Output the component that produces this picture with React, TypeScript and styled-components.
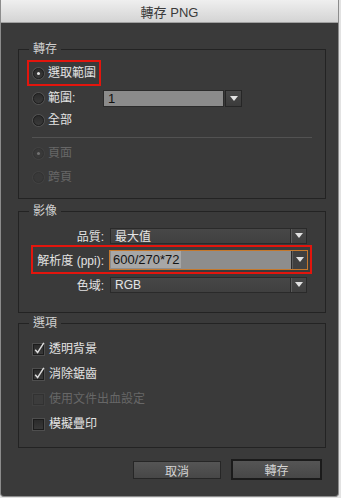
import styled, { createGlobalStyle } from "styled-components";

const GlobalStyle = createGlobalStyle`
  html, body {
    margin: 0;
    padding: 0;
    background: #e2e2e2;
  }
  body {
    font-family: "Liberation Sans", "Noto Sans CJK TC", sans-serif;
    font-size: 12px;
  }
`;

const Window = styled.div`
  box-sizing: border-box;
  width: 339px;
  height: 497px;
  display: flex;
  flex-direction: column;
  border: 1px solid #8c8c8c;
  border-top: none;
  border-radius: 0 0 4px 4px;
  overflow: hidden;
  background: #3a3a3a;
`;

const TitleBar = styled.div`
  flex: none;
  height: 22px;
  display: flex;
  align-items: center;
  justify-content: center;
  background: linear-gradient(#efefef, #d4d4d4);
  border-bottom: 1px solid #a0a0a0;
  color: #3a3a3a;
  font-size: 13px;
`;

const Body = styled.div`
  flex: 1;
  display: flex;
  flex-direction: column;
  padding: 18px 12px 0 17px;
`;

const Group = styled.fieldset<{ $mt?: number; $pt: number; $pb: number }>`
  margin: ${({ $mt }) => $mt ?? 0}px 0 0;
  padding: ${({ $pt }) => $pt}px 13px ${({ $pb }) => $pb}px 8px;
  border: 1px solid #232323;
  min-width: 0;
  display: flex;
  flex-direction: column;
  align-items: flex-start;
`;

const Legend = styled.legend`
  margin-left: 2px;
  padding: 0 4px;
  line-height: 16px;
  font-size: 12px;
  color: #d0d0d0;
`;

const Marked = styled.div`
  display: flex;
  align-items: center;
  height: 22px;
  padding: 0 3px 0 4px;
  border: 2px solid #e3150d;
`;

const OptionRow = styled.div<{ $mt?: number }>`
  display: flex;
  align-items: center;
  height: 20px;
  margin: ${({ $mt }) => $mt ?? 0}px 0 0 6px;
`;

const Radio = styled.span<{ $on?: boolean; $off?: boolean }>`
  box-sizing: border-box;
  flex: none;
  width: 11px;
  height: 11px;
  border-radius: 50%;
  display: flex;
  align-items: center;
  justify-content: center;
  border: 1px solid ${({ $off }) => ($off ? "#333333" : "#1e1e1e")};
  background: ${({ $off }) => ($off ? "#393939" : "linear-gradient(#2c2c2c, #3a3a3a)")};
  box-shadow: 0 0 0 1px ${({ $off }) => ($off ? "rgba(255,255,255,0.04)" : "rgba(255,255,255,0.12)")};

  &::after {
    content: "";
    display: ${({ $on }) => ($on ? "block" : "none")};
    width: 3px;
    height: 3px;
    border-radius: 50%;
    background: ${({ $off }) => ($off ? "#727272" : "#e6e6e6")};
  }
`;

const Text = styled.span<{ $off?: boolean; $w?: number; $gap?: number }>`
  margin-left: ${({ $gap }) => $gap ?? 4}px;
  ${({ $w }) => ($w ? `width: ${$w}px;` : "")}
  color: ${({ $off }) => ($off ? "#676767" : "#e4e4e4")};
  font-size: 12px;
  line-height: 16px;
  white-space: nowrap;
`;

const RangeInput = styled.div`
  box-sizing: border-box;
  width: 121px;
  height: 17px;
  padding-left: 4px;
  background: #8b8b8b;
  border: 1px solid #2b2b2b;
  color: #111;
  font-size: 13px;
  line-height: 15px;
`;

const DropButton = styled.div`
  box-sizing: border-box;
  width: 17px;
  height: 17px;
  margin-left: 1px;
  display: flex;
  align-items: center;
  justify-content: center;
  background: linear-gradient(#484848, #3b3b3b);
  border: 1px solid #262626;
`;

const Triangle = styled.span`
  width: 0;
  height: 0;
  border-left: 4px solid transparent;
  border-right: 4px solid transparent;
  border-top: 5px solid #e2e2e2;
`;

const Divider = styled.div`
  align-self: stretch;
  height: 1px;
  margin: 7px 0 0 5px;
  background: #525252;
`;

const FieldRow = styled.div<{ $mark?: boolean; $mt?: number }>`
  box-sizing: border-box;
  align-self: stretch;
  height: ${({ $mark }) => ($mark ? 29 : 20)}px;
  margin: ${({ $mt }) => $mt ?? 0}px 0 0 4px;
  padding-right: 3px;
  display: grid;
  grid-template-columns: 71px 1fr;
  column-gap: 6px;
  align-items: center;
  border: 2px solid ${({ $mark }) => ($mark ? "#e3150d" : "transparent")};
`;

const FieldLabel = styled.span`
  text-align: right;
  color: #e2e2e2;
  font-size: 12px;
  white-space: nowrap;
`;

const Select = styled.div<{ $focus?: boolean }>`
  box-sizing: border-box;
  height: ${({ $focus }) => ($focus ? 20 : 16)}px;
  margin: 0 ${({ $focus }) => ($focus ? -1 : 0)}px;
  display: flex;
  align-items: stretch;
  border: 1px solid ${({ $focus }) => ($focus ? "#c5782c" : "#2a2a2a")};
  background: ${({ $focus }) => ($focus ? "#8d8d8d" : "linear-gradient(#474747, #404040)")};
`;

const SelectValue = styled.span<{ $focus?: boolean }>`
  flex: 1;
  display: flex;
  align-items: center;
  padding-left: ${({ $focus }) => ($focus ? 1 : 4)}px;
  color: ${({ $focus }) => ($focus ? "#141414" : "#e6e6e6")};
  font-size: ${({ $focus }) => ($focus ? 13 : 12)}px;
`;

const Highlighted = styled.span`
  padding: 1px 1px 1px 2px;
  background: #a7a7a7;
`;

const SelectArrow = styled.span<{ $focus?: boolean }>`
  flex: none;
  width: 15px;
  display: flex;
  align-items: center;
  justify-content: center;
  border-left: 1px solid #2a2a2a;
  box-shadow: inset 1px 0 0 #5c5c5c;
  background: ${({ $focus }) => ($focus ? "#404040" : "transparent")};
`;

const CheckList = styled.div`
  display: flex;
  flex-direction: column;
  gap: 5px;
`;

const Box = styled.span<{ $off?: boolean }>`
  position: relative;
  box-sizing: border-box;
  flex: none;
  width: 11px;
  height: 11px;
  border: 1px solid ${({ $off }) => ($off ? "#323232" : "#1c1c1c")};
  background: ${({ $off }) => ($off ? "#3c3c3c" : "linear-gradient(#2b2b2b, #383838)")};
  box-shadow: 0 0 0 1px ${({ $off }) => ($off ? "rgba(255,255,255,0.03)" : "rgba(255,255,255,0.1)")};
`;

const Tick = styled.svg`
  position: absolute;
  left: -1px;
  top: -1px;
  width: 11px;
  height: 11px;
  overflow: visible;
`;

const ButtonRow = styled.div`
  display: flex;
  justify-content: flex-end;
  align-items: center;
  gap: 10px;
  height: 21px;
  margin-top: 11px;
  padding-right: 4px;
`;

const Button = styled.button<{ $primary?: boolean }>`
  box-sizing: border-box;
  width: ${({ $primary }) => ($primary ? 91 : 88)}px;
  height: ${({ $primary }) => ($primary ? 21 : 18)}px;
  padding: 0;
  border: ${({ $primary }) => ($primary ? "2px solid #1b1b1b" : "1px solid #262626")};
  background: linear-gradient(#555555, #474747);
  color: #d4d4d4;
  font-family: inherit;
  font-size: 12px;
`;

const Check = ({ on, off, label }: { on?: boolean; off?: boolean; label: string }) => (
  <OptionRow>
    <Box $off={off}>
      {on && (
        <Tick viewBox="0 0 11 11">
          <path d="M2.2 5.8 L4.6 8.6 L10.8 -1.2" fill="none" stroke="#dcdcdc" strokeWidth="1.5" />
        </Tick>
      )}
    </Box>
    <Text $off={off} $gap={5}>{label}</Text>
  </OptionRow>
);

export default function App() {
  return (
    <>
      <GlobalStyle />
      <Window>
        <TitleBar>轉存 PNG</TitleBar>
        <Body>
          <Group $pt={3} $pb={11}>
            <Legend>轉存</Legend>
            <Marked>
              <Radio $on />
              <Text>選取範圍</Text>
            </Marked>
            <OptionRow $mt={2}>
              <Radio />
              <Text $w={55}>範圍:</Text>
              <RangeInput>1</RangeInput>
              <DropButton>
                <Triangle />
              </DropButton>
            </OptionRow>
            <OptionRow $mt={2}>
              <Radio />
              <Text>全部</Text>
            </OptionRow>
            <Divider />
            <OptionRow $mt={5}>
              <Radio $on $off />
              <Text $off>頁面</Text>
            </OptionRow>
            <OptionRow $mt={4}>
              <Radio $off />
              <Text $off>跨頁</Text>
            </OptionRow>
          </Group>

          <Group $mt={4} $pt={6} $pb={18}>
            <Legend>影像</Legend>
            <FieldRow>
              <FieldLabel>品質:</FieldLabel>
              <Select>
                <SelectValue>最大值</SelectValue>
                <SelectArrow>
                  <Triangle />
                </SelectArrow>
              </Select>
            </FieldRow>
            <FieldRow $mark>
              <FieldLabel>解析度 (ppi):</FieldLabel>
              <Select $focus>
                <SelectValue $focus>
                  <Highlighted>600/270*72</Highlighted>
                </SelectValue>
                <SelectArrow $focus>
                  <Triangle />
                </SelectArrow>
              </Select>
            </FieldRow>
            <FieldRow>
              <FieldLabel>色域:</FieldLabel>
              <Select>
                <SelectValue>RGB</SelectValue>
                <SelectArrow>
                  <Triangle />
                </SelectArrow>
              </Select>
            </FieldRow>
          </Group>

          <Group $mt={2} $pt={8} $pb={13}>
            <Legend>選項</Legend>
            <CheckList>
              <Check on label="透明背景" />
              <Check on label="消除鋸齒" />
              <Check off label="使用文件出血設定" />
              <Check label="模擬疊印" />
            </CheckList>
          </Group>

          <ButtonRow>
            <Button>取消</Button>
            <Button $primary>轉存</Button>
          </ButtonRow>
        </Body>
      </Window>
    </>
  );
}
